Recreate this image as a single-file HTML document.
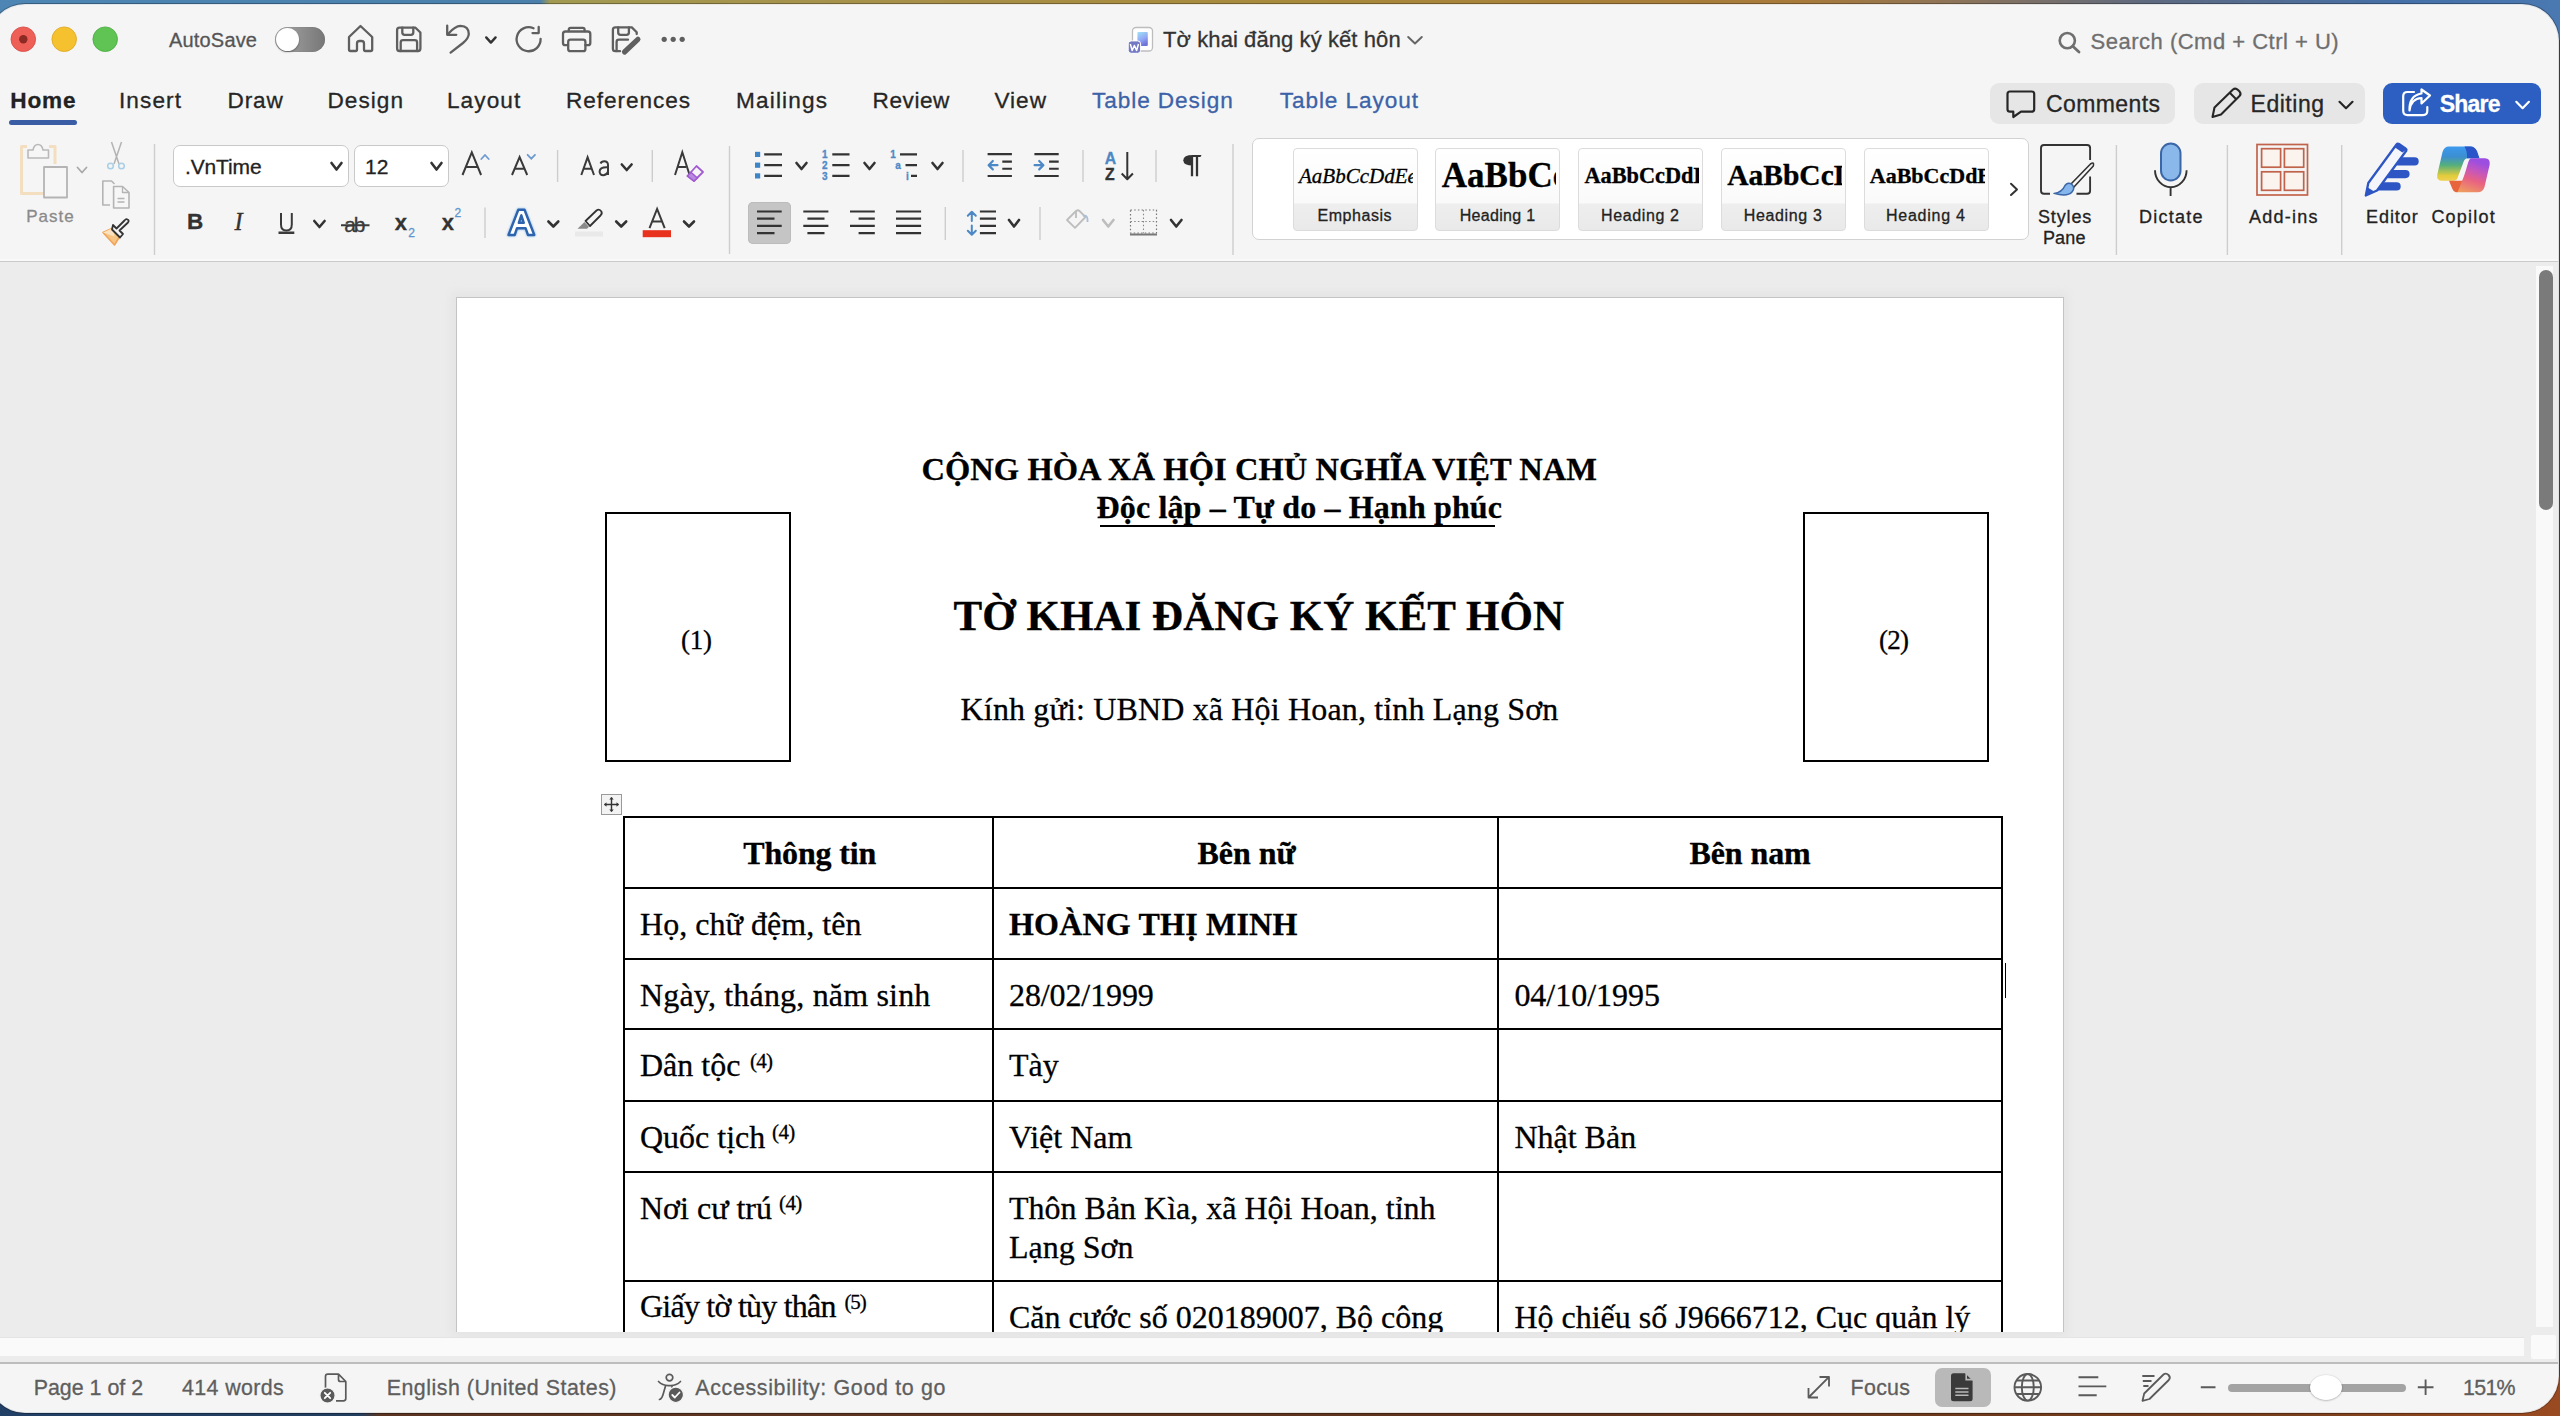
<!DOCTYPE html>
<html><head><meta charset="utf-8"><style>
html,body{margin:0;padding:0;}
body{width:2560px;height:1416px;overflow:hidden;position:relative;
background:
 linear-gradient(90deg,#4d86b4 0px,#4a80ab 540px,#a29a52 550px,#a7904a 900px,#a88a3c 1300px,#a87a3a 1800px,#8e7458 1950px,#5e6a80 2150px,#4570a8 2400px,#4a78b0 2560px) top/100% 40px no-repeat,
 linear-gradient(90deg,#223f66 0px,#223f60 360px,#5a3421 380px,#60331c 1600px,#7a3f1c 2300px,#9a4a20 2560px) bottom/100% 40px no-repeat,
 #555;}
.t{position:absolute;white-space:pre;line-height:1;-webkit-text-stroke:0.3px currentColor;}
.b{position:absolute;}
svg.ov{position:absolute;left:0;top:0;}
#win{position:absolute;left:-11px;top:5px;width:2569px;height:1407px;border-radius:36px;overflow:hidden;background:#f5f5f5;box-shadow:0 0 0 1px rgba(255,255,255,0.85),0 0 0 2px rgba(0,0,0,0.3);}
#inn{position:absolute;left:11px;top:-5px;width:2560px;height:1416px;}
</style></head><body>
<div id="win"><div id="inn">
<div class="b" style="left:0px;top:258.5px;width:2560px;height:2px;background:#f9f9f9;"></div>
<div class="b" style="left:0px;top:260.6px;width:2560px;height:1.8px;background:#cacaca;"></div>
<div class="b" style="left:0px;top:262.4px;width:2560px;height:1100px;background:#ececec;"></div>
<div class="b" style="left:451px;top:292px;width:1617px;height:1045px;background:linear-gradient(#e3e3e3,#e3e3e3);filter:blur(4px);opacity:0.8;"></div>
<div class="b" style="left:455.5px;top:296.5px;width:1608px;height:1035.5px;background:#fff;border:1.5px solid #c4c4c4;border-bottom:none;box-sizing:border-box;"></div>
<div class="b" style="left:0px;top:1337px;width:2524px;height:1px;background:#e4e4e4;"></div>
<div class="b" style="left:0px;top:1338px;width:2524px;height:18px;background:#fafafa;"></div>
<div class="b" style="left:2531px;top:1335px;width:25px;height:24px;background:#fafafa;border-radius:2px;"></div>
<div class="b" style="left:2536px;top:266px;width:17px;height:1061px;background:#f9f9f9;"></div>
<div class="b" style="left:2539px;top:270px;width:14px;height:240px;background:#7a7a7a;border-radius:7px;"></div>
<div class="b" style="left:0px;top:1362.4px;width:2560px;height:1.7px;background:#bdbdbd;"></div>
<div class="b" style="left:0px;top:1364px;width:2560px;height:48px;background:#f5f5f5;"></div>
<div class="t " style="left:169.00px;top:29.57px;font-size:20px;font-family:'Liberation Sans', sans-serif;color:#555;letter-spacing:0.179px;">AutoSave</div>
<div class="b" style="left:275px;top:27px;width:50px;height:25px;border-radius:12.5px;background:linear-gradient(90deg,#a9a9a9,#777);box-shadow:inset 0 0 1px rgba(0,0,0,0.3);"></div>
<div class="b" style="left:276px;top:28px;width:23px;height:23px;border-radius:50%;background:#fff;box-shadow:0 1px 2px rgba(0,0,0,0.35);"></div>
<div class="t " style="left:1163.00px;top:28.88px;font-size:22px;font-family:'Liberation Sans', sans-serif;color:#333;letter-spacing:0.084px;">Tờ khai đăng ký kết hôn</div>
<div class="t " style="left:2090.60px;top:31.38px;font-size:22px;font-family:'Liberation Sans', sans-serif;color:#6f6f6f;letter-spacing:0.497px;">Search (Cmd + Ctrl + U)</div>
<div class="t " style="left:10.30px;top:90.27px;font-size:22.6px;font-family:'Liberation Sans', sans-serif;color:#222;font-weight:bold;letter-spacing:0.845px;">Home</div>
<div class="b" style="left:9px;top:120px;width:68px;height:5px;background:#3a5da5;border-radius:2.5px;"></div>
<div class="t " style="left:119.00px;top:90.27px;font-size:22.6px;font-family:'Liberation Sans', sans-serif;color:#262626;letter-spacing:1.097px;">Insert</div>
<div class="t " style="left:227.50px;top:90.27px;font-size:22.6px;font-family:'Liberation Sans', sans-serif;color:#262626;letter-spacing:0.860px;">Draw</div>
<div class="t " style="left:327.50px;top:90.27px;font-size:22.6px;font-family:'Liberation Sans', sans-serif;color:#262626;letter-spacing:1.038px;">Design</div>
<div class="t " style="left:446.90px;top:90.27px;font-size:22.6px;font-family:'Liberation Sans', sans-serif;color:#262626;letter-spacing:1.114px;">Layout</div>
<div class="t " style="left:566.00px;top:90.27px;font-size:22.6px;font-family:'Liberation Sans', sans-serif;color:#262626;letter-spacing:0.941px;">References</div>
<div class="t " style="left:736.00px;top:90.27px;font-size:22.6px;font-family:'Liberation Sans', sans-serif;color:#262626;letter-spacing:1.163px;">Mailings</div>
<div class="t " style="left:872.50px;top:90.27px;font-size:22.6px;font-family:'Liberation Sans', sans-serif;color:#262626;letter-spacing:0.567px;">Review</div>
<div class="t " style="left:994.40px;top:90.27px;font-size:22.6px;font-family:'Liberation Sans', sans-serif;color:#262626;letter-spacing:1.018px;">View</div>
<div class="t " style="left:1092.00px;top:90.27px;font-size:22.6px;font-family:'Liberation Sans', sans-serif;color:#3c62a8;letter-spacing:0.928px;">Table Design</div>
<div class="t " style="left:1279.70px;top:90.27px;font-size:22.6px;font-family:'Liberation Sans', sans-serif;color:#3c62a8;letter-spacing:0.926px;">Table Layout</div>
<div class="b" style="left:1990px;top:83px;width:185px;height:41px;background:#e6e6e6;border-radius:9px;"></div>
<div class="b" style="left:2194px;top:83px;width:171px;height:41px;background:#e6e6e6;border-radius:9px;"></div>
<div class="b" style="left:2383px;top:83px;width:158px;height:41px;background:#2c5fc1;border-radius:9px;"></div>
<div class="t " style="left:2046.00px;top:93.13px;font-size:23px;font-family:'Liberation Sans', sans-serif;color:#262626;letter-spacing:0.400px;">Comments</div>
<div class="t " style="left:2250.60px;top:93.13px;font-size:23px;font-family:'Liberation Sans', sans-serif;color:#262626;letter-spacing:0.509px;">Editing</div>
<div class="t " style="left:2439.70px;top:93.13px;font-size:23px;font-family:'Liberation Sans', sans-serif;color:#ffffff;font-weight:bold;letter-spacing:-0.759px;">Share</div>
<div class="t " style="left:26.30px;top:208.31px;font-size:17px;font-family:'Liberation Sans', sans-serif;color:#8a8a8a;letter-spacing:0.983px;">Paste</div>
<div class="b" style="left:173px;top:145px;width:176px;height:42px;background:#fff;border:1px solid #c9c9c9;border-radius:7px;box-sizing:border-box;"></div>
<div class="b" style="left:354px;top:145px;width:95px;height:42px;background:#fff;border:1px solid #c9c9c9;border-radius:7px;box-sizing:border-box;"></div>
<div class="t " style="left:185.00px;top:155.62px;font-size:21px;font-family:'Liberation Sans', sans-serif;color:#222;letter-spacing:-0.132px;">.VnTime</div>
<div class="t " style="left:365.00px;top:155.62px;font-size:21px;font-family:'Liberation Sans', sans-serif;color:#222;">12</div>
<div class="b" style="left:1252px;top:138px;width:777px;height:102px;background:#fff;border:1px solid #d2d2d2;border-radius:7px;box-sizing:border-box;"></div>
<div class="b" style="left:1292.5px;top:148px;width:125px;height:83px;border:1px solid #dcdcdc;border-radius:4px;box-sizing:border-box;background:linear-gradient(#fff 0,#fafafa 54px,#eeeeee 55px,#e9e9e9 83px);"></div>
<div class="t " style="left:1317.50px;top:207.71px;font-size:16px;font-family:'Liberation Sans', sans-serif;color:#222;letter-spacing:0.546px;">Emphasis</div>
<div class="b" style="left:1435.3px;top:148px;width:125px;height:83px;border:1px solid #dcdcdc;border-radius:4px;box-sizing:border-box;background:linear-gradient(#fff 0,#fafafa 54px,#eeeeee 55px,#e9e9e9 83px);"></div>
<div class="t " style="left:1459.70px;top:207.71px;font-size:16px;font-family:'Liberation Sans', sans-serif;color:#222;letter-spacing:0.323px;">Heading 1</div>
<div class="b" style="left:1578.4px;top:148px;width:125px;height:83px;border:1px solid #dcdcdc;border-radius:4px;box-sizing:border-box;background:linear-gradient(#fff 0,#fafafa 54px,#eeeeee 55px,#e9e9e9 83px);"></div>
<div class="t " style="left:1601.00px;top:207.71px;font-size:16px;font-family:'Liberation Sans', sans-serif;color:#222;letter-spacing:0.623px;">Heading 2</div>
<div class="b" style="left:1721.25px;top:148px;width:125px;height:83px;border:1px solid #dcdcdc;border-radius:4px;box-sizing:border-box;background:linear-gradient(#fff 0,#fafafa 54px,#eeeeee 55px,#e9e9e9 83px);"></div>
<div class="t " style="left:1743.75px;top:207.71px;font-size:16px;font-family:'Liberation Sans', sans-serif;color:#222;letter-spacing:0.642px;">Heading 3</div>
<div class="b" style="left:1864px;top:148px;width:125px;height:83px;border:1px solid #dcdcdc;border-radius:4px;box-sizing:border-box;background:linear-gradient(#fff 0,#fafafa 54px,#eeeeee 55px,#e9e9e9 83px);"></div>
<div class="t " style="left:1886.00px;top:207.71px;font-size:16px;font-family:'Liberation Sans', sans-serif;color:#222;letter-spacing:0.748px;">Heading 4</div>
<div class="b" style="left:0;top:0;width:1413.4px;height:262px;overflow:hidden;">
<div class="t " style="left:1299.00px;top:166.01px;font-size:21px;font-family:'Liberation Serif', serif;color:#000;font-style:italic;">AaBbCcDdEe</div>
</div>
<div class="b" style="left:0;top:0;width:1556px;height:262px;overflow:hidden;">
<div class="t " style="left:1441.80px;top:157.59px;font-size:35px;font-family:'Liberation Serif', serif;color:#000;font-weight:bold;">AaBbCcDd</div>
</div>
<div class="b" style="left:0;top:0;width:1699px;height:262px;overflow:hidden;">
<div class="t " style="left:1584.50px;top:164.92px;font-size:22.3px;font-family:'Liberation Serif', serif;color:#000;font-weight:bold;">AaBbCcDdEe</div>
</div>
<div class="b" style="left:0;top:0;width:1842px;height:262px;overflow:hidden;">
<div class="t " style="left:1727.20px;top:160.89px;font-size:29.5px;font-family:'Liberation Serif', serif;color:#000;font-weight:bold;">AaBbCcDd</div>
</div>
<div class="b" style="left:0;top:0;width:1985px;height:262px;overflow:hidden;">
<div class="t " style="left:1869.80px;top:164.97px;font-size:22px;font-family:'Liberation Serif', serif;color:#000;font-weight:bold;">AaBbCcDdEe</div>
</div>
<div class="t " style="left:2038.00px;top:207.56px;font-size:18px;font-family:'Liberation Sans', sans-serif;color:#222;letter-spacing:0.857px;">Styles</div>
<div class="t " style="left:2043.00px;top:228.76px;font-size:18px;font-family:'Liberation Sans', sans-serif;color:#222;letter-spacing:0.118px;">Pane</div>
<div class="t " style="left:2139.00px;top:207.56px;font-size:18px;font-family:'Liberation Sans', sans-serif;color:#222;letter-spacing:1.245px;">Dictate</div>
<div class="t " style="left:2249.00px;top:207.56px;font-size:18px;font-family:'Liberation Sans', sans-serif;color:#222;letter-spacing:1.242px;">Add-ins</div>
<div class="t " style="left:2366.00px;top:207.56px;font-size:18px;font-family:'Liberation Sans', sans-serif;color:#222;letter-spacing:0.934px;">Editor</div>
<div class="t " style="left:2431.40px;top:207.56px;font-size:18px;font-family:'Liberation Sans', sans-serif;color:#222;letter-spacing:1.209px;">Copilot</div>
<div class="t " style="left:921.40px;top:453.08px;font-size:32.5px;font-family:'Liberation Serif', serif;color:#000;font-weight:bold;letter-spacing:0.073px;">CỘNG HÒA XÃ HỘI CHỦ NGHĨA VIỆT NAM</div>
<div class="t " style="left:1096.60px;top:491.20px;font-size:32px;font-family:'Liberation Serif', serif;color:#000;font-weight:bold;letter-spacing:0.137px;">Độc lập – Tự do – Hạnh phúc</div>
<div class="b" style="left:1099.6px;top:524.5px;width:395px;height:2px;background:#000;"></div>
<div class="b" style="left:605px;top:512px;width:186px;height:250px;border:2px solid #000;box-sizing:border-box;"></div>
<div class="b" style="left:1803px;top:512px;width:186px;height:250px;border:2px solid #000;box-sizing:border-box;"></div>
<div class="t " style="left:681.00px;top:627.19px;font-size:27px;font-family:'Liberation Serif', serif;color:#000;letter-spacing:-0.234px;">(1)</div>
<div class="t " style="left:1879.00px;top:627.19px;font-size:27px;font-family:'Liberation Serif', serif;color:#000;letter-spacing:-0.734px;">(2)</div>
<div class="t " style="left:953.50px;top:594.19px;font-size:43px;font-family:'Liberation Serif', serif;color:#000;font-weight:bold;letter-spacing:0.038px;">TỜ KHAI ĐĂNG KÝ KẾT HÔN</div>
<div class="t " style="left:960.60px;top:692.50px;font-size:32px;font-family:'Liberation Serif', serif;color:#000;letter-spacing:0.153px;">Kính gửi: UBND xã Hội Hoan, tỉnh Lạng Sơn</div>
<div class="b" style="left:623.1px;top:816.1px;width:2.0px;height:515.9px;background:#000;"></div>
<div class="b" style="left:992.1px;top:816.1px;width:2.0px;height:515.9px;background:#000;"></div>
<div class="b" style="left:1497.1px;top:816.1px;width:2.0px;height:515.9px;background:#000;"></div>
<div class="b" style="left:2001.1px;top:816.1px;width:2.0px;height:515.9px;background:#000;"></div>
<div class="b" style="left:623.1px;top:816.1px;width:1380px;height:2.0px;background:#000;"></div>
<div class="b" style="left:623.1px;top:887.1px;width:1380px;height:2.0px;background:#000;"></div>
<div class="b" style="left:623.1px;top:958.1px;width:1380px;height:2.0px;background:#000;"></div>
<div class="b" style="left:623.1px;top:1028.1px;width:1380px;height:2.0px;background:#000;"></div>
<div class="b" style="left:623.1px;top:1100.1px;width:1380px;height:2.0px;background:#000;"></div>
<div class="b" style="left:623.1px;top:1171.1px;width:1380px;height:2.0px;background:#000;"></div>
<div class="b" style="left:623.1px;top:1280.1px;width:1380px;height:2.0px;background:#000;"></div>
<div class="t " style="left:743.30px;top:837.00px;font-size:32px;font-family:'Liberation Serif', serif;color:#000;font-weight:bold;letter-spacing:-0.160px;">Thông tin</div>
<div class="t " style="left:1197.40px;top:837.00px;font-size:32px;font-family:'Liberation Serif', serif;color:#000;font-weight:bold;">Bên nữ</div>
<div class="t " style="left:1689.50px;top:837.00px;font-size:32px;font-family:'Liberation Serif', serif;color:#000;font-weight:bold;letter-spacing:-0.099px;">Bên nam</div>
<div class="t " style="left:640.00px;top:907.90px;font-size:32px;font-family:'Liberation Serif', serif;color:#000;letter-spacing:0.037px;">Họ, chữ đệm, tên</div>
<div class="t " style="left:1009.00px;top:907.90px;font-size:32px;font-family:'Liberation Serif', serif;color:#000;font-weight:bold;letter-spacing:0.203px;">HOÀNG THỊ MINH</div>
<div class="t " style="left:640.00px;top:979.00px;font-size:32px;font-family:'Liberation Serif', serif;color:#000;letter-spacing:0.177px;">Ngày, tháng, năm sinh</div>
<div class="t " style="left:1009.00px;top:979.00px;font-size:32px;font-family:'Liberation Serif', serif;color:#000;letter-spacing:-0.109px;">28/02/1999</div>
<div class="t " style="left:1514.40px;top:979.00px;font-size:32px;font-family:'Liberation Serif', serif;color:#000;letter-spacing:-0.031px;">04/10/1995</div>
<div class="t " style="left:640.00px;top:1049.00px;font-size:32px;font-family:'Liberation Serif', serif;color:#000;">Dân tộc</div>
<div class="t " style="left:750.00px;top:1050.51px;font-size:21px;font-family:'Liberation Serif', serif;color:#000;letter-spacing:-0.750px;">(4)</div>
<div class="t " style="left:1009.00px;top:1049.00px;font-size:32px;font-family:'Liberation Serif', serif;color:#000;">Tày</div>
<div class="t " style="left:640.00px;top:1120.80px;font-size:32px;font-family:'Liberation Serif', serif;color:#000;">Quốc tịch</div>
<div class="t " style="left:772.00px;top:1121.81px;font-size:21px;font-family:'Liberation Serif', serif;color:#000;letter-spacing:-0.600px;">(4)</div>
<div class="t " style="left:1009.00px;top:1120.80px;font-size:32px;font-family:'Liberation Serif', serif;color:#000;">Việt Nam</div>
<div class="t " style="left:1514.40px;top:1120.80px;font-size:32px;font-family:'Liberation Serif', serif;color:#000;">Nhật Bản</div>
<div class="t " style="left:640.00px;top:1192.00px;font-size:32px;font-family:'Liberation Serif', serif;color:#000;">Nơi cư trú</div>
<div class="t " style="left:779.00px;top:1193.11px;font-size:21px;font-family:'Liberation Serif', serif;color:#000;letter-spacing:-0.600px;">(4)</div>
<div class="t " style="left:1009.00px;top:1192.00px;font-size:32px;font-family:'Liberation Serif', serif;color:#000;">Thôn Bản Kìa, xã Hội Hoan, tỉnh</div>
<div class="t " style="left:1009.00px;top:1230.50px;font-size:32px;font-family:'Liberation Serif', serif;color:#000;">Lạng Sơn</div>
<div class="t " style="left:640.00px;top:1290.00px;font-size:32px;font-family:'Liberation Serif', serif;color:#000;letter-spacing:-0.767px;">Giấy tờ tùy thân</div>
<div class="t " style="left:844.40px;top:1292.01px;font-size:21px;font-family:'Liberation Serif', serif;color:#000;letter-spacing:-1.050px;">(5)</div>
<div class="b" style="left:0;top:0;width:2560px;height:1332px;overflow:hidden;">
<div class="t " style="left:1009.00px;top:1300.80px;font-size:32px;font-family:'Liberation Serif', serif;color:#000;">Căn cước số 020189007, Bộ công</div>
<div class="t " style="left:1514.40px;top:1300.80px;font-size:32px;font-family:'Liberation Serif', serif;color:#000;">Hộ chiếu số J9666712, Cục quản lý</div>
</div>
<div class="b" style="left:2004.5px;top:962.6px;width:1.6px;height:35.4px;background:#000;"></div>
<div class="t " style="left:33.70px;top:1377.98px;font-size:21.4px;font-family:'Liberation Sans', sans-serif;color:#5e5e5e;letter-spacing:-0.006px;">Page 1 of 2</div>
<div class="t " style="left:182.00px;top:1377.98px;font-size:21.4px;font-family:'Liberation Sans', sans-serif;color:#5e5e5e;letter-spacing:0.379px;">414 words</div>
<div class="t " style="left:386.70px;top:1377.98px;font-size:21.4px;font-family:'Liberation Sans', sans-serif;color:#5e5e5e;letter-spacing:0.500px;">English (United States)</div>
<div class="t " style="left:695.30px;top:1377.98px;font-size:21.4px;font-family:'Liberation Sans', sans-serif;color:#5e5e5e;letter-spacing:0.660px;">Accessibility: Good to go</div>
<div class="t " style="left:1850.60px;top:1377.98px;font-size:21.4px;font-family:'Liberation Sans', sans-serif;color:#5e5e5e;letter-spacing:0.288px;">Focus</div>
<div class="t " style="left:2463.00px;top:1377.98px;font-size:21.4px;font-family:'Liberation Sans', sans-serif;color:#5e5e5e;letter-spacing:-0.696px;">151%</div>
<div class="t " style="left:186.90px;top:211.15px;font-size:22.5px;font-family:'Liberation Sans', sans-serif;color:#333;font-weight:bold;">B</div>
<div class="t " style="left:234.50px;top:209.68px;font-size:24.5px;font-family:'Liberation Serif', serif;color:#333;font-style:italic;">I</div>
<div class="t " style="left:344.30px;top:213.52px;font-size:21px;font-family:'Liberation Sans', sans-serif;color:#3a3a3a;letter-spacing:-2.244px;">ab</div>
<div class="t " style="left:394.80px;top:211.58px;font-size:22px;font-family:'Liberation Sans', sans-serif;color:#333;font-weight:bold;">x</div>
<div class="t " style="left:408.30px;top:227.44px;font-size:12px;font-family:'Liberation Sans', sans-serif;color:#5e95cf;">2</div>
<div class="t " style="left:441.70px;top:211.58px;font-size:22px;font-family:'Liberation Sans', sans-serif;color:#333;font-weight:bold;">x</div>
<div class="t " style="left:454.60px;top:207.44px;font-size:12px;font-family:'Liberation Sans', sans-serif;color:#5e95cf;">2</div>
<div class="t " style="left:822.00px;top:150.24px;font-size:10px;font-family:'Liberation Sans', sans-serif;color:#4e8ac6;font-weight:bold;">1</div>
<div class="t " style="left:822.00px;top:161.03px;font-size:10px;font-family:'Liberation Sans', sans-serif;color:#4e8ac6;font-weight:bold;">2</div>
<div class="t " style="left:822.00px;top:171.74px;font-size:10px;font-family:'Liberation Sans', sans-serif;color:#4e8ac6;font-weight:bold;">3</div>
<div class="t " style="left:890.30px;top:150.34px;font-size:10px;font-family:'Liberation Sans', sans-serif;color:#4e8ac6;font-weight:bold;">1</div>
<div class="t " style="left:895.20px;top:161.13px;font-size:10px;font-family:'Liberation Sans', sans-serif;color:#4e8ac6;font-weight:bold;">a</div>
<div class="t " style="left:906.00px;top:171.84px;font-size:10px;font-family:'Liberation Sans', sans-serif;color:#4e8ac6;font-weight:bold;">i</div>
<div class="t " style="left:1104.80px;top:150.63px;font-size:15.8px;font-family:'Liberation Sans', sans-serif;color:#4b88c5;font-weight:bold;">A</div>
<div class="t " style="left:1105.00px;top:166.83px;font-size:15.8px;font-family:'Liberation Sans', sans-serif;color:#333;font-weight:bold;">Z</div>
<div class="b" style="left:748px;top:202px;width:43px;height:42px;background:#c5c5c5;border-radius:5px;box-shadow:inset 0 0 0 1px #bcbcbc;"></div>
<div class="b" style="left:1935px;top:1368px;width:55.5px;height:38.5px;background:#b9b9b9;border-radius:7px;"></div>
<div class="b" style="left:2228px;top:1384px;width:178px;height:7.5px;background:#a3a3a3;border-radius:4px;"></div>
<div class="b" style="left:2310px;top:1374.7px;width:32px;height:25px;background:#fff;border-radius:50%;box-shadow:0 0.5px 2px rgba(0,0,0,0.35);"></div>
<div class="b" style="left:601px;top:794px;width:21px;height:21px;border:1px solid #9a9a9a;background:#f3f3f3;box-sizing:border-box;"></div>
<svg class="ov" width="2560" height="1416" viewBox="0 0 2560 1416">
<circle cx="23.3" cy="39.2" r="12.3" fill="#ee5f58" stroke="#d64a42" stroke-width="0.8"/>
<circle cx="23.3" cy="39.2" r="4.2" fill="#8e2a24"/>
<circle cx="64.2" cy="39.2" r="12.3" fill="#f5c12f" stroke="#dca623" stroke-width="0.8"/>
<circle cx="105.2" cy="39.2" r="12.3" fill="#5fc453" stroke="#4aab40" stroke-width="0.8"/>
<g fill="none" stroke="#5f5f5f" stroke-width="2.3" stroke-linejoin="round" stroke-linecap="round">
<path d="M349,37 L360.5,26 L372.2,37 V49.5 Q372.2,51 370.7,51 H365.5 Q364,51 364,49.5 V43.5 Q364,41 361.5,41 H359.5 Q357,41 357,43.5 V49.5 Q357,51 355.5,51 H350.5 Q349,51 349,49.5 Z"/>
<path d="M399.5,27.7 H415.5 L420.4,32.5 V48.5 Q420.4,51 418,51 H399.5 Q397.1,51 397.1,48.5 V30.2 Q397.1,27.7 399.5,27.7 Z"/>
<path d="M402.3,27.7 V32.5 Q402.3,34.8 404.6,34.8 H411 Q413.3,34.8 413.3,32.5 V27.7"/>
<path d="M400.7,51 V42.5 Q400.7,40.2 403,40.2 H414.8 Q417.1,40.2 417.1,42.5 V51"/>
<path d="M447.2,25.7 V34.8 H456.3"/>
<path d="M448.5,33.5 Q455,26 460.5,25.8 Q468.8,26 468.8,34 Q468.5,38.5 463,43 L450.6,52.6"/>
<path d="M533.5,28.3 A12,12 0 1 0 540.6,38.8"/>
<path d="M538.7,27 V33.1 H532.5"/>
<path d="M568.8,31.2 V29.6 Q568.8,27.8 570.6,27.8 H582.8 Q584.6,27.8 584.6,29.6 V31.2"/>
<path d="M568,45.2 H565.2 Q563,45.2 563,43 V34 Q563,31.5 565.5,31.5 H587.8 Q590.3,31.5 590.3,34 V43 Q590.3,45.2 588.1,45.2 H585.4"/>
<rect x="568.2" y="39.7" width="17.2" height="11.4" rx="2.2"/>
<path d="M620,51.2 H615.3 Q612.9,51.2 612.9,48.8 V29.8 Q612.9,27.4 615.3,27.4 H631.8 L636.7,32.3 V34"/>
<path d="M618.2,27.4 V32.5 Q618.2,34.8 620.5,34.8 H626.6 Q628.9,34.8 628.9,32.5 V27.4"/>
<path d="M616.6,51 V42 Q616.6,39.7 618.9,39.7 H628"/>
</g>
<path d="M624.5,52 L637.9,39.3" stroke="#5f5f5f" stroke-width="5.2" stroke-linecap="round"/>
<path d="M486.2,37.4 L490.9,42.6 L495.6,37.4" fill="none" stroke="#333" stroke-width="2.4" stroke-linecap="round" stroke-linejoin="round"/>
<circle cx="664.2" cy="39.3" r="2.6" fill="#5f5f5f"/>
<circle cx="673.2" cy="39.3" r="2.6" fill="#5f5f5f"/>
<circle cx="682.2" cy="39.3" r="2.6" fill="#5f5f5f"/>
<defs><linearGradient id="dg" x1="0" y1="0" x2="0.4" y2="1"><stop offset="0" stop-color="#9fe2f5"/><stop offset="0.6" stop-color="#93a8f7"/><stop offset="1" stop-color="#6f74d8"/></linearGradient></defs>
<rect x="1132.5" y="27.5" width="20" height="23.5" rx="3.5" fill="#fff" stroke="#bdbdbd" stroke-width="1.3"/>
<rect x="1137.4" y="32.1" width="10.4" height="13.9" rx="1" fill="url(#dg)"/>
<rect x="1128.2" y="40.9" width="12.4" height="12.4" rx="3" fill="#7379c4" stroke="#fff" stroke-width="1"/>
<path d="M1130.3,44 L1132.2,50.5 L1134.4,45.5 L1136.6,50.5 L1138.5,44" fill="none" stroke="#fff" stroke-width="1.5" stroke-linejoin="round"/>
<path d="M1408.2,37 L1415,43.5 L1421.8,37" fill="none" stroke="#666" stroke-width="2" stroke-linecap="round" stroke-linejoin="round"/>
<circle cx="2067.3" cy="40.6" r="7.6" fill="none" stroke="#6f6f6f" stroke-width="2.6"/>
<path d="M2072.8,46.3 L2079,52" stroke="#6f6f6f" stroke-width="2.8" stroke-linecap="round"/>
<path d="M2010,91.5 H2031.7 Q2034.2,91.5 2034.2,94 V109.2 Q2034.2,111.7 2031.7,111.7 H2021 L2013.3,117 V111.7 H2010 Q2007.5,111.7 2007.5,109.2 V94 Q2007.5,91.5 2010,91.5 Z" fill="none" stroke="#262626" stroke-width="2.2" stroke-linejoin="round"/>
<g fill="none" stroke="#262626" stroke-width="2.1" stroke-linejoin="round"><path d="M2212.5,117 L2214.5,107.5 L2233,89.5 Q2235.5,87.5 2238,90 L2239.6,91.6 Q2241.5,94 2239.5,96 L2221,114.5 Z"/><path d="M2229.7,92.8 L2236.5,99.4"/></g>
<path d="M2339.5,101.8 L2346,108.2 L2352.5,101.8" fill="none" stroke="#262626" stroke-width="2.2" stroke-linecap="round" stroke-linejoin="round"/>
<g fill="none" stroke="#fff" stroke-width="2.2" stroke-linejoin="round" stroke-linecap="round"><path d="M2414,92 H2407.5 Q2403.2,92 2403.2,96.3 V110.8 Q2403.2,115.1 2407.5,115.1 H2423 Q2427.3,115.1 2427.3,110.8 V107"/><path d="M2409.5,110.5 Q2411,98.5 2421.5,98 V103.5 L2430,95.5 L2421.5,89.5 V93.5 Q2409,95.5 2409.5,110.5 Z"/></g>
<path d="M2516.3,101.8 L2522.6,108.2 L2528.9,101.8" fill="none" stroke="#fff" stroke-width="2.2" stroke-linecap="round" stroke-linejoin="round"/>
<g fill="none" stroke-linejoin="round">
<path d="M27,146.5 H21.5 V193.5 H44" stroke="#f3dfbf" stroke-width="3"/>
<path d="M49,146.5 H55 V164" stroke="#f3dfbf" stroke-width="3"/>
<path d="M28,158 V150 H33 Q34,144.5 38,144.5 Q42,144.5 43,150 H48.5 V158 Z" stroke="#b9b9b9" stroke-width="1.6" fill="#f6f6f6"/>
<rect x="44" y="167" width="23" height="30.5" stroke="#b4b4b4" stroke-width="1.8" fill="#f6f6f6"/>
<path d="M77.5,167.5 L82,172.5 L86.5,167.5" stroke="#a9a9a9" stroke-width="1.8" stroke-linecap="round"/>
<path d="M111.5,142 L119,164 M121.5,142 L114,164" stroke="#b3b3b3" stroke-width="1.5"/>
<circle cx="110.5" cy="166" r="2.8" stroke="#a9cfe6" stroke-width="1.5"/>
<circle cx="121.5" cy="166" r="2.8" stroke="#a9cfe6" stroke-width="1.5"/>
<path d="M110,205 H102.8 V181 H111.5 L114.5,184" stroke="#b4b4b4" stroke-width="1.6"/>
<path d="M113.6,208 V186.5 H122.5 L129,192.5 V208 Z" stroke="#b4b4b4" stroke-width="1.6" fill="#f6f6f6"/>
<path d="M122.5,186.5 V192.5 H129 M117.5,198.5 H124.5 M117.5,202 H124.5" stroke="#b4b4b4" stroke-width="1.3"/>
</g>
<path d="M103,232.5 L113,228 L120,236 L114.5,245 Z" fill="#f7c583" stroke="#f0a45a" stroke-width="1.6" stroke-linejoin="round"/>
<path d="M103,232.5 L113,228 L114.5,236.5 Z" fill="#fbe2c0"/>
<path d="M112,229.5 L120,237.5 L123,234 L119.5,230.5 L128,222.5 Q129.5,220.5 127.5,219.5 Q126,218.5 124.5,220.5 L116.5,228.5 L113,225 Z" fill="#f4f4f4" stroke="#333" stroke-width="1.8" stroke-linejoin="round"/>
<path d="M154.5,144 V255" stroke="#cdcdcd" stroke-width="1.4"/>
<path d="M729.5,146 V254" stroke="#cdcdcd" stroke-width="1.4"/>
<path d="M1233,144 V255" stroke="#cdcdcd" stroke-width="1.4"/>
<path d="M557.6,150 V182" stroke="#cdcdcd" stroke-width="1.4"/>
<path d="M652.3,150 V182" stroke="#cdcdcd" stroke-width="1.4"/>
<path d="M485,207.5 V238" stroke="#cdcdcd" stroke-width="1.4"/>
<path d="M963,150 V182" stroke="#cdcdcd" stroke-width="1.4"/>
<path d="M1083,150 V182" stroke="#cdcdcd" stroke-width="1.4"/>
<path d="M1156,150 V182" stroke="#cdcdcd" stroke-width="1.4"/>
<path d="M945.3,207 V240" stroke="#cdcdcd" stroke-width="1.4"/>
<path d="M1040,207 V240" stroke="#cdcdcd" stroke-width="1.4"/>
<path d="M2116.4,145 V255" stroke="#cdcdcd" stroke-width="1.4"/>
<path d="M2227.4,145 V255" stroke="#cdcdcd" stroke-width="1.4"/>
<path d="M2341.7,145 V255" stroke="#cdcdcd" stroke-width="1.4"/>
<path d="M331.5,163 L336.5,169.5 L341.5,163" fill="none" stroke="#333" stroke-width="2.6" stroke-linecap="round" stroke-linejoin="round"/>
<path d="M431.5,163 L436.5,169.5 L441.5,163" fill="none" stroke="#333" stroke-width="2.6" stroke-linecap="round" stroke-linejoin="round"/>
<path d="M621.8,164.5 L626.7,170 L631.6,164.5" fill="none" stroke="#333" stroke-width="2.6" stroke-linecap="round" stroke-linejoin="round"/>
<path d="M314.3,221 L319.45000000000005,227 L324.6,221" fill="none" stroke="#333" stroke-width="2.6" stroke-linecap="round" stroke-linejoin="round"/>
<path d="M548.4,221.5 L553.3499999999999,226.5 L558.3,221.5" fill="none" stroke="#333" stroke-width="2.6" stroke-linecap="round" stroke-linejoin="round"/>
<path d="M616.2,221.5 L621.2,226.5 L626.2,221.5" fill="none" stroke="#333" stroke-width="2.6" stroke-linecap="round" stroke-linejoin="round"/>
<path d="M684,221.5 L689.0,226.5 L694,221.5" fill="none" stroke="#333" stroke-width="2.6" stroke-linecap="round" stroke-linejoin="round"/>
<path d="M796.5,163 L801.5,169 L806.5,163" fill="none" stroke="#333" stroke-width="2.6" stroke-linecap="round" stroke-linejoin="round"/>
<path d="M864.5,163 L869.5,169 L874.5,163" fill="none" stroke="#333" stroke-width="2.6" stroke-linecap="round" stroke-linejoin="round"/>
<path d="M932.5,163 L937.5,169 L942.5,163" fill="none" stroke="#333" stroke-width="2.6" stroke-linecap="round" stroke-linejoin="round"/>
<path d="M1009,220 L1014.0,226.5 L1019,220" fill="none" stroke="#333" stroke-width="2.6" stroke-linecap="round" stroke-linejoin="round"/>
<path d="M1103,220 L1108.25,226.5 L1113.5,220" fill="none" stroke="#bdbdbd" stroke-width="2.6" stroke-linecap="round" stroke-linejoin="round"/>
<path d="M1171,220 L1176.25,226.5 L1181.5,220" fill="none" stroke="#333" stroke-width="2.6" stroke-linecap="round" stroke-linejoin="round"/>
<g fill="none" stroke="#3a3a3a" stroke-width="2"><path d="M462.5,175 L471.8,152.3 L481.1,175 M465.8,167 H477.8"/><path d="M512,175 L519.6,157 L527.2,175 M514.7,168.7 H524.5"/><path d="M581.3,175 L587.6,157.3 L594,175 M583.5,168.7 H591.7"/><path d="M675,175 L682.3,152.3 L689.6,175 M677.5,167 H686"/></g>
<path d="M481.3,159 L485,155 L488.7,159" fill="none" stroke="#6c9bd2" stroke-width="1.8" stroke-linecap="round"/>
<path d="M527.6,154.8 L531.3,158.6 L535,154.8" fill="none" stroke="#6c9bd2" stroke-width="1.8" stroke-linecap="round"/>
<path d="M600.5,163.5 Q601.5,161.3 604.2,161.3 Q608,161.3 608,165 V175 M608,167.3 Q600,166.8 599.6,171.3 Q599.5,175.3 603.5,175.2 Q607,175 608,171.5" fill="none" stroke="#3a3a3a" stroke-width="2"/>
<path d="M687.5,176 L696.5,166 L703,172 L694,181 Z" fill="none" stroke="#a25bd3" stroke-width="1.8" stroke-linejoin="round"/>
<path d="M687.5,176 L691,172.3 L697.3,178 L694,181 Z" fill="#b98ae0" stroke="#a25bd3" stroke-width="1.5"/>
<path d="M281,213 V224.5 Q281,230.5 286.4,230.5 Q291.8,230.5 291.8,224.5 V213" fill="none" stroke="#3a3a3a" stroke-width="2"/>
<path d="M278.5,232.8 H294.3" stroke="#3a3a3a" stroke-width="2.4"/>
<path d="M341,225.3 H369.5" stroke="#3a3a3a" stroke-width="2"/>
<path d="M508.5,235 L518.3,209.8 H524.5 L534.3,235 H528 L525.6,228.2 H517 L514.7,235 Z M518.8,222.8 H523.8 L521.3,215.3 Z" fill="#fff" stroke="#2e63ad" stroke-width="2.4" stroke-linejoin="round" style="filter:drop-shadow(0 0 1px #7fb6ea)"/>
<rect x="575" y="231.5" width="28" height="5" fill="#e9e9e9"/>
<path d="M585.5,221 L596.5,210.5 Q599,208.5 601,211 Q602.8,213 600.5,215.5 L590,226 Z" fill="#f4f4f4" stroke="#333" stroke-width="1.8" stroke-linejoin="round"/>
<path d="M584.5,222 L589,226.8 L587,228.7 L577.5,228.7 Z" fill="#8a8a8a"/>
<path d="M649.5,228.2 L657.1,209 L664.7,228.2 M652.2,221.5 H662" fill="none" stroke="#3a3a3a" stroke-width="2"/>
<rect x="642.7" y="230.2" width="28.3" height="7" fill="#e8321e"/>
<rect x="755" y="151.8" width="5.2" height="5.2" fill="#3d85c6"/>
<path d="M764.2,154.4 H782" stroke="#333" stroke-width="2.2"/>
<path d="M832.3,154.4 H849.5" stroke="#333" stroke-width="2.2"/>
<rect x="755" y="162.6" width="5.2" height="5.2" fill="#3d85c6"/>
<path d="M764.2,165.2 H782" stroke="#333" stroke-width="2.2"/>
<path d="M832.3,165.2 H849.5" stroke="#333" stroke-width="2.2"/>
<rect x="755" y="173.3" width="5.2" height="5.2" fill="#3d85c6"/>
<path d="M764.2,175.9 H782" stroke="#333" stroke-width="2.2"/>
<path d="M832.3,175.9 H849.5" stroke="#333" stroke-width="2.2"/>
<path d="M900,154.4 H917" stroke="#333" stroke-width="2.2"/>
<path d="M905.5,165.2 H917" stroke="#333" stroke-width="2.2"/>
<path d="M911,175.9 H917" stroke="#333" stroke-width="2.2"/>
<path d="M987.6,154.2 H1011.9" stroke="#333" stroke-width="2.2"/>
<path d="M1002.3000000000001,161.6 H1011.9" stroke="#333" stroke-width="2.2"/>
<path d="M1002.3000000000001,168.75 H1011.9" stroke="#333" stroke-width="2.2"/>
<path d="M987.6,176 H1011.9" stroke="#333" stroke-width="2.2"/>
<path d="M1034.4,154.2 H1058.7" stroke="#333" stroke-width="2.2"/>
<path d="M1049.1000000000001,161.6 H1058.7" stroke="#333" stroke-width="2.2"/>
<path d="M1049.1000000000001,168.75 H1058.7" stroke="#333" stroke-width="2.2"/>
<path d="M1034.4,176 H1058.7" stroke="#333" stroke-width="2.2"/>
<path d="M997.5,165.2 H988.8 M992.8,161 L988.6,165.2 L992.8,169.4" fill="none" stroke="#4b88c5" stroke-width="2.2" stroke-linecap="round" stroke-linejoin="round"/>
<path d="M1034.6,165.2 H1043.2 M1039.2,161 L1043.4,165.2 L1039.2,169.4" fill="none" stroke="#4b88c5" stroke-width="2.2" stroke-linecap="round" stroke-linejoin="round"/>
<path d="M1127.3,152.1 V179 M1121.7,173.5 L1127.3,179.2 L1132.9,173.5" fill="none" stroke="#333" stroke-width="2" stroke-linejoin="round"/>
<path d="M1192,156 V176.3 M1197,156 V176.3" stroke="#333" stroke-width="2.3"/><path d="M1193,154.9 H1201.5 L1200.5,157.1 H1193 Z" fill="#333"/><path d="M1193,155 Q1183.3,155 1183.3,160.3 Q1183.3,165.6 1193,165.6 Z" fill="#333"/>
<path d="M757,211.5 H781.7" stroke="#333" stroke-width="2.2"/>
<path d="M803.3,211.5 H828.4" stroke="#333" stroke-width="2.2"/>
<path d="M850,211.5 H874.8" stroke="#333" stroke-width="2.2"/>
<path d="M896,211.5 H921.1" stroke="#333" stroke-width="2.2"/>
<path d="M979.9,211.5 H996" stroke="#333" stroke-width="2.2"/>
<path d="M757,218.7 H774.5" stroke="#333" stroke-width="2.2"/>
<path d="M807.4,218.7 H824.5" stroke="#333" stroke-width="2.2"/>
<path d="M858.6,218.7 H874.8" stroke="#333" stroke-width="2.2"/>
<path d="M896,218.7 H921.1" stroke="#333" stroke-width="2.2"/>
<path d="M979.9,218.7 H996" stroke="#333" stroke-width="2.2"/>
<path d="M757,225.9 H781.7" stroke="#333" stroke-width="2.2"/>
<path d="M803.3,225.9 H828.4" stroke="#333" stroke-width="2.2"/>
<path d="M850,225.9 H874.8" stroke="#333" stroke-width="2.2"/>
<path d="M896,225.9 H921.1" stroke="#333" stroke-width="2.2"/>
<path d="M979.9,225.9 H996" stroke="#333" stroke-width="2.2"/>
<path d="M757,233.1 H774.5" stroke="#333" stroke-width="2.2"/>
<path d="M807.4,233.1 H824.5" stroke="#333" stroke-width="2.2"/>
<path d="M858.6,233.1 H874.8" stroke="#333" stroke-width="2.2"/>
<path d="M896,233.1 H921.1" stroke="#333" stroke-width="2.2"/>
<path d="M979.9,233.1 H996" stroke="#333" stroke-width="2.2"/>
<path d="M971.8,212 V221 M971.8,225.5 V234.5 M967.8,215.8 L971.8,211.8 L975.8,215.8 M967.8,230.7 L971.8,234.7 L975.8,230.7" fill="none" stroke="#4b88c5" stroke-width="2" stroke-linecap="round" stroke-linejoin="round"/>
<path d="M1067,220 L1076,211 Q1078,209.5 1079.5,211 L1085.5,217 L1075,227.8 Z" fill="none" stroke="#bdbdbd" stroke-width="1.8" stroke-linejoin="round"/><path d="M1076,211 V218" stroke="#bdbdbd" stroke-width="1.8"/><path d="M1083,216 Q1087,214.5 1087.5,219 V222" fill="none" stroke="#a9bfd8" stroke-width="1.8"/>
<rect x="1130.5" y="210" width="26" height="23" fill="none" stroke="#777" stroke-width="1.2" stroke-dasharray="1.5,2.2"/>
<path d="M1143.5,210 V233 M1130.5,221.5 H1156.5" stroke="#888" stroke-width="1.1" stroke-dasharray="1.5,2.2"/>
<path d="M1130,234.6 H1157" stroke="#777" stroke-width="2"/>
<path d="M2011,183.8 L2017,189.4 L2011,195" fill="none" stroke="#333" stroke-width="2" stroke-linecap="round" stroke-linejoin="round"/>
<path d="M2090.1,160 V148 Q2090.1,145 2087.1,145 H2044 Q2041,145 2041,148 V190.8 Q2041,193.8 2044,193.8 H2050 M2076.5,193.8 H2087.1 Q2090.1,193.8 2090.1,190.8 V176.5" fill="none" stroke="#333" stroke-width="1.9"/>
<path d="M2070.5,184.5 L2090.5,164 Q2094.5,161.5 2093.3,166 L2073.5,187.5 Z" fill="#f7f7f7" stroke="#333" stroke-width="1.6" stroke-linejoin="round"/>
<path d="M2054,193.4 Q2062,192.5 2065,185.5 Q2068,181.5 2072,184.5 Q2075.5,188 2072,192 Q2067.5,197 2054,193.4 Z" fill="#86b6ec" stroke="#3b67a8" stroke-width="1.5" stroke-linejoin="round"/>
<rect x="2161" y="143.5" width="19.5" height="37" rx="9.75" fill="#8bb8ea" stroke="#3b67a8" stroke-width="2"/>
<path d="M2155,170.2 A15.8,17 0 0 0 2186.6,170.2 M2170.6,187.3 V196" fill="none" stroke="#333" stroke-width="1.9"/>
<g fill="#fbf3ee" stroke="#c1634b" stroke-width="1.7"><rect x="2257" y="144.5" width="50.5" height="50.5" fill="none"/><rect x="2261.6" y="148.7" width="19" height="18.5"/><rect x="2284.4" y="148.7" width="19.3" height="18.5"/><rect x="2261.6" y="171.8" width="19" height="18.5"/><rect x="2284.4" y="171.8" width="19.3" height="18.5"/></g>
<g stroke="#2d56c4" stroke-linecap="round"><path d="M2398,161.4 H2414.6" stroke-width="8.2"/><path d="M2388,174.1 H2405.5" stroke-width="8.2"/><path d="M2378,186.4 H2396.6" stroke-width="8.2"/></g>
<path d="M2365.8,195.5 L2368.3,183 L2396.5,144.5 Q2397.5,143.2 2399,144 L2405.8,148.6 Q2407,149.5 2406.2,150.8 L2377,190.5 Z" fill="#f4f6fb" stroke="#2d56c4" stroke-width="2.3" stroke-linejoin="round"/>
<path d="M2396.9,143.6 L2406.6,149.5 L2402.4,152.6 L2394.7,147.3 Z" fill="#2d56c4"/>
<path d="M2365.5,196 L2367.8,187.5 L2374.5,191.8 Z" fill="#2d56c4"/>
<defs><linearGradient id="cpl" x1="0" y1="0" x2="0" y2="1"><stop offset="0" stop-color="#3d9af0"/><stop offset="0.3" stop-color="#3c8fd0"/><stop offset="0.55" stop-color="#56b07a"/><stop offset="0.85" stop-color="#e2cc3c"/><stop offset="1" stop-color="#f0d050"/></linearGradient><linearGradient id="cpr" x1="0.3" y1="0" x2="0" y2="1"><stop offset="0" stop-color="#9b4ee0"/><stop offset="0.25" stop-color="#c256c0"/><stop offset="0.55" stop-color="#e86282"/><stop offset="1" stop-color="#f0a45a"/></linearGradient></defs>
<path d="M2449,146.4 H2470.5 Q2474,146.4 2476,150 L2479,158.2 H2468 Q2464.5,158.2 2463.5,162 L2457.5,178 Q2456.5,180.8 2453.5,180.8 H2442 Q2436.5,180.8 2437.2,175 L2442.5,152 Q2444,146.4 2449,146.4 Z" fill="url(#cpl)"/>
<path d="M2464.5,146.4 H2470.5 Q2475,146.5 2477,151 L2479.5,158.2 H2467 Q2467.5,151.5 2464.5,146.4 Z" fill="#2a55c8"/>
<path d="M2449,180.8 H2464 L2460.5,189.5 Q2459,192.8 2455.8,192.3 Q2453.3,191.8 2452.3,188.8 Z" fill="#e8643c"/>
<path d="M2471.5,158.2 H2485 Q2490.3,158.2 2489.7,164.5 L2484.5,187 Q2483,192.3 2477.5,192.3 H2457.5 L2464,176 Q2466.2,169.5 2468,163 Q2469.3,158.2 2471.5,158.2 Z" fill="url(#cpr)"/>
<path d="M333,1374.2 H338.5 L345.8,1381.5 V1398.5 Q345.8,1400.8 343.5,1400.8 H336 M325.5,1388 V1376.5 Q325.5,1374.2 327.8,1374.2 H333 M338.5,1374.2 V1379.5 Q338.5,1381.5 340.5,1381.5 H345.8" fill="none" stroke="#5a5a5a" stroke-width="1.7" stroke-linejoin="round"/>
<circle cx="327.5" cy="1395.5" r="7.6" fill="#5a5a5a" stroke="#f4f4f4" stroke-width="1.2"/>
<path d="M324.8,1392.8 L330.2,1398.2 M330.2,1392.8 L324.8,1398.2" stroke="#fff" stroke-width="1.8" stroke-linecap="round"/>
<g fill="none" stroke="#5a5a5a" stroke-width="1.7" stroke-linecap="round" stroke-linejoin="round"><circle cx="669.5" cy="1377.6" r="3.3"/><path d="M658.5,1381.5 Q663,1386 669.5,1385.5 Q676,1386 680.5,1381.5"/><path d="M665.5,1386 L663.5,1393 Q662,1399 659.5,1399.5"/><path d="M672,1386.5 L672.5,1390"/></g>
<circle cx="675.8" cy="1394.8" r="7.7" fill="#5a5a5a" stroke="#f4f4f4" stroke-width="1.2"/>
<path d="M672.3,1395 L674.8,1397.5 L679.5,1392.5" fill="none" stroke="#fff" stroke-width="1.8" stroke-linecap="round" stroke-linejoin="round"/>
<path d="M1809,1397 L1828.8,1377.2 M1819.5,1377 H1829 V1386.5 M1808.5,1388 V1397.5 H1818" fill="none" stroke="#5a5a5a" stroke-width="1.8" stroke-linejoin="round"/>
<path d="M1953.5,1373.2 H1965 L1972.6,1380.8 V1398.8 Q1972.6,1401.3 1970.1,1401.3 H1953.5 Q1951,1401.3 1951,1398.8 V1375.7 Q1951,1373.2 1953.5,1373.2 Z" fill="#3a3a3a"/>
<path d="M1966.2,1373.2 V1379.6 H1972.6" fill="none" stroke="#b9b9b9" stroke-width="1.6"/>
<path d="M1955.3,1388.5 H1968.5 M1955.3,1391.9 H1968.5 M1955.3,1395.3 H1968.5" stroke="#b9b9b9" stroke-width="1.5"/>
<g fill="none" stroke="#5a5a5a" stroke-width="1.9"><circle cx="2027.8" cy="1387.3" r="13.3"/><ellipse cx="2027.8" cy="1387.3" rx="6" ry="13.3"/><path d="M2014.5,1387.3 H2041.1 M2016.5,1380.5 H2039 M2016.5,1394 H2039"/></g>
<path d="M2078.5,1377.3 H2098.3 M2078.5,1386.4 H2106.3 M2078.5,1395.2 H2096.7" stroke="#5a5a5a" stroke-width="1.9"/>
<g fill="none" stroke="#5a5a5a" stroke-width="1.8" stroke-linejoin="round"><path d="M2142.3,1376 H2154.5 M2142.8,1381 H2151.5 M2143.3,1386 H2148.5"/><path d="M2142.5,1400.8 L2144.2,1393.5 L2163.5,1374.5 Q2166,1372.5 2168.5,1375 Q2171,1377.5 2168.8,1380 L2149.5,1399 Z"/></g>
<path d="M2200.8,1387.3 H2215.5 M2417.8,1387.3 H2433.5 M2425.6,1379.5 V1395" stroke="#5a5a5a" stroke-width="1.9"/>
<path d="M611.5,797.5 V811.5 M604.5,804.5 H618.5" stroke="#333" stroke-width="1.4"/><path d="M609.3,799.5 L611.5,797 L613.7,799.5 Z M609.3,809.5 L611.5,812 L613.7,809.5 Z M606.5,802.3 L604,804.5 L606.5,806.7 Z M616.5,802.3 L619,804.5 L616.5,806.7 Z" fill="#333"/>
</svg>
</div></div>
</body></html>
